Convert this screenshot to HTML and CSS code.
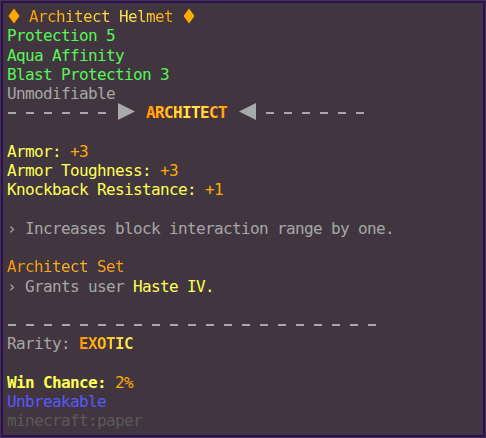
FILE: index.html
```html
<!DOCTYPE html>
<html lang="en">
<head>
<meta charset="utf-8">
<title>Architect Helmet</title>
<link rel="stylesheet" href="styles.css">
</head>
<body>
<div class="tooltip">
  <div class="line title"><svg class="diamond" width="13" height="16" viewBox="0 0 13 16"><polygon points="7,0.5 12.5,8 7,15.5 1.5,8" fill="#ffaa00"/></svg> <span class="grad-title">Architect Helmet</span> <svg class="diamond" width="13" height="16" viewBox="0 0 13 16"><polygon points="7,0.5 12.5,8 7,15.5 1.5,8" fill="#ffaa00"/></svg></div>
  <div class="line green">Protection 5</div>
  <div class="line green">Aqua Affinity</div>
  <div class="line green">Blast Protection 3</div>
  <div class="line grey">Unmodifiable</div>
  <div class="line divider">
    <span class="dashes d6"></span>
    <svg class="tri tri-r" width="17" height="17" viewBox="0 0 17 17"><polygon points="0,0 17,8.5 0,17" fill="#a9a9a9"/></svg>
    <span class="grad-bold">ARCHITECT</span>
    <svg class="tri tri-l" width="17" height="17" viewBox="0 0 17 17"><polygon points="17,0 0,8.5 17,17" fill="#a9a9a9"/></svg>
    <span class="dashes d6"></span>
  </div>
  <div class="line"></div>
  <div class="line yellow">Armor: <span class="gold">+3</span></div>
  <div class="line yellow">Armor Toughness: <span class="gold">+3</span></div>
  <div class="line yellow">Knockback Resistance: <span class="gold">+1</span></div>
  <div class="line"></div>
  <div class="line grey">› Increases block interaction range by one.</div>
  <div class="line"></div>
  <div class="line"><span class="grad-set">Architect Set</span></div>
  <div class="line grey">› Grants user <span class="yellow">Haste IV.</span></div>
  <div class="line"></div>
  <div class="line divider"><span class="dashes d21"></span></div>
  <div class="line grey">Rarity: <span class="grad-exotic">EXOTIC</span></div>
  <div class="line"></div>
  <div class="line"><span class="yellow bold">Win Chance:</span> <span class="gold">2%</span></div>
  <div class="line blue">Unbreakable</div>
  <div class="line dark">minecraft:paper</div>
</div>
</body>
</html>
```

FILE: styles.css
```css
html, body {
  margin: 0;
  padding: 0;
  background: #41363f;
}

body {
  width: 486px;
  height: 438px;
  overflow: hidden;
  font-family: "DejaVu Sans Mono", "Liberation Mono", monospace;
  font-size: 16px;
  letter-spacing: -0.63px;
}

.tooltip {
  box-sizing: border-box;
  margin: 1px;
  width: 484px;
  height: 436px;
  border: 2px solid #2c0d5e;
  background: #41363f;
  padding: 4px 4px 4px 4px;
}

.line {
  height: 19.25px;
  line-height: 19.25px;
  white-space: pre;
}

.green { color: #58f558; }
.grey { color: #a6a6a6; }
.yellow { color: #ffff55; }
.gold { color: #ffaa00; }
.blue { color: #5858ff; }
.dark { color: #5a5a5a; }
.bold { font-weight: bold; }

.diamond {
  display: inline-block;
  vertical-align: -2px;
}

.grad-title {
  background: linear-gradient(90deg, #ff9c00 0%, #ffd83a 45%, #ffe85a 70%, #ffa200 100%);
  -webkit-background-clip: text;
  background-clip: text;
  color: transparent;
}

.grad-set {
  background: linear-gradient(90deg, #ff9800 0%, #ffb42a 60%, #ff9c10 100%);
  -webkit-background-clip: text;
  background-clip: text;
  color: transparent;
}

.divider {
  display: flex;
  align-items: center;
  padding-left: 1px;
}

.dashes {
  display: inline-block;
  height: 2px;
  background: repeating-linear-gradient(90deg, #a8a8a8 0 8px, transparent 8px 18px);
  margin-top: 1px;
}

.d6 { width: 98px; }
.d21 { width: 368px; }

.tri { flex: none; display: block; margin-top: -3px; }
.tri-r { margin-left: 12px; margin-right: 11px; }
.tri-l { margin-left: 12px; margin-right: 10px; }

.grad-bold {
  font-weight: bold;
  background: linear-gradient(90deg, #ff9c00 0%, #ffe030 40%, #fff050 60%, #ffa000 100%);
  -webkit-background-clip: text;
  background-clip: text;
  color: transparent;
  filter: drop-shadow(1px 0 0 #b8342a);
}

.grad-exotic {
  font-weight: bold;
  background: linear-gradient(90deg, #ff9800 0%, #ffc020 50%, #fff060 100%);
  -webkit-background-clip: text;
  background-clip: text;
  color: transparent;
}
```
